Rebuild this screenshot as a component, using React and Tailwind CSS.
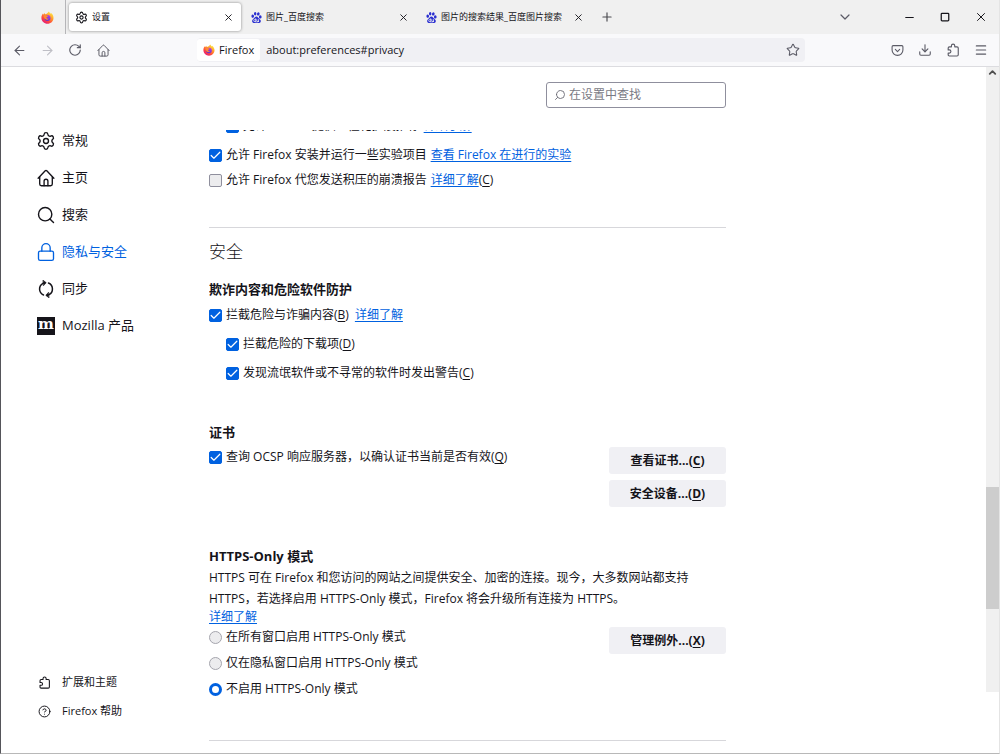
import React from 'react';
import {
  ArrowLeft,
  ArrowRight,
  Check,
  ChevronDown,
  ChevronUp,
  CircleHelp,
  Download,
  Lock,
  Menu,
  Minus,
  Plus,
  Pocket,
  RotateCw,
  Search,
  Settings,
  Square,
  Star,
  X,
} from 'lucide-react';
import { SiBaidu } from 'react-icons/si';

const FirefoxLogo = ({ className }) => (
  <svg viewBox="0 0 24 24" className={className} aria-hidden="true">
    <defs>
      <linearGradient id="fx-flame" x1="0.85" y1="0.05" x2="0.2" y2="0.95">
        <stop offset="0" stopColor="#fff04a" />
        <stop offset="0.35" stopColor="#ffa42e" />
        <stop offset="0.7" stopColor="#ff4a3d" />
        <stop offset="1" stopColor="#e3187c" />
      </linearGradient>
      <linearGradient id="fx-globe" x1="0.7" y1="0" x2="0.3" y2="1">
        <stop offset="0" stopColor="#b03df0" />
        <stop offset="1" stopColor="#5a35c8" />
      </linearGradient>
    </defs>
    <path
      fill="url(#fx-flame)"
      d="M14.500.8c1.300 1.500 1.700 2.700 3.400 4.200.5-.2.300-1 .2-1.600 2.900 2 5 5.200 5 9.300C23.100 18.800 18 23.400 12 23.400S.8 18.700.8 12.700c0-3.200 1-6 2.700-8 .1.900.3 1.500.7 2 .5-1.300 1.400-2.500 2.500-3.200 0 1 .3 1.900.8 2.500 2.700-.6 4.800-2.200 7-5.200z"
    />
    <circle cx="12" cy="13" r="5.600" fill="url(#fx-globe)" />
    <path
      fill="#ff8a30"
      d="M4.800 8.200c2-1.500 4.300-1.300 6 .2 1.300.2 2.500.3 2.500 1-.2 1.400-2.600 1.300-3.200 2.700.2 1.800 2 2.600 4.600 1.600-1.200 2.200-4 3-6.200 1.700C5.900 14 4.600 11.200 4.800 8.200z"
    />
  </svg>
);

const HomeIcon = ({ className }) => (
  <svg viewBox="0 0 16 16" fill="none" stroke="currentColor" strokeWidth="1.200" strokeLinecap="round" strokeLinejoin="round" className={className} aria-hidden="true">
    <path d="M1 8.200 7.300 1.600a1 1 0 0 1 1.400 0L15 8.200" />
    <path d="M2.400 7v6.400c0 .9.600 1.500 1.500 1.500h8.200c.9 0 1.500-.6 1.500-1.500V7" />
    <path d="M6.300 14.800v-4a1.700 1.700 0 0 1 3.400 0v4" />
  </svg>
);

const PuzzleIcon = ({ className }) => (
  <svg viewBox="0 0 16 16" fill="none" stroke="currentColor" strokeWidth="1.300" strokeLinejoin="round" className={className} aria-hidden="true">
    <path d="M2.500 5.800c0-.9.500-1.400 1.400-1.400h2.300V3.200a1.900 1.900 0 0 1 3.800 0v1.200h2.600c.9 0 1.400.5 1.400 1.400v7.700c0 .9-.5 1.400-1.400 1.400H3.900c-.9 0-1.400-.5-1.400-1.400v-2h1.300a1.800 1.800 0 0 0 0-3.600H2.500z" />
  </svg>
);

const SyncIcon = ({ className }) => (
  <svg viewBox="0 0 18 18" fill="none" stroke="currentColor" strokeWidth="1.500" strokeLinecap="round" className={className} aria-hidden="true">
    <path d="M6.500 15A6.500 6.500 0 0 1 6 3.300l1.800-.7" />
    <path d="M11.500 3a6.500 6.500 0 0 1 .5 11.700l-1.800.7" />
    <path d="M6.200.3 9.200 2.700 6.600 5.600zM11.800 17.700l-3-2.400 2.600-2.900z" fill="currentColor" strokeWidth="0.600" />
  </svg>
);

const MozillaIcon = () => (
  <span className="flex size-[18px] items-center justify-center bg-[#15141a] pb-[3px] font-['DejaVu_Serif',serif] text-[15px] leading-[15px] font-bold text-white" aria-hidden="true">
    m
  </span>
);

const tabs = [
  { title: '设置', icon: <Settings className="size-[13px]" strokeWidth={2} />, active: true },
  { title: '图片_百度搜索', icon: <SiBaidu className="size-[11px] text-[#2a2fd0]" /> },
  { title: '图片的搜索结果_百度图片搜索', icon: <SiBaidu className="size-[11px] text-[#2a2fd0]" /> },
];

const categories = [
  { name: '常规', icon: <Settings className="size-5" strokeWidth={1.6} /> },
  { name: '主页', icon: <HomeIcon className="size-[18px]" /> },
  { name: '搜索', icon: <Search className="size-5" strokeWidth={1.7} /> },
  { name: '隐私与安全', icon: <Lock className="size-5" strokeWidth={1.6} />, current: true },
  { name: '同步', icon: <SyncIcon className="size-[18px]" /> },
  { name: 'Mozilla 产品', icon: <MozillaIcon /> },
];

const iconButton = 'flex h-7 w-7 items-center justify-center';

const TabStrip = () => (
  <div className="flex h-[34px] items-center bg-[#f0f0f0]">
    <button type="button" aria-label="Firefox" className="flex h-full w-[65px] items-center justify-end border-r border-[#b5b5b8] pr-[11px]">
      <FirefoxLogo className="size-[13px]" />
    </button>
    <div className="ml-[3px] flex gap-[3px]">
      {tabs.map((tab) => (
        <div
          key={tab.title}
          className={
            tab.active
              ? 'flex h-7 w-[172px] items-center rounded-[3px] bg-white pr-[7px] pl-[6px] shadow-[0_0_3px_rgba(0,0,0,0.45)]'
              : 'flex h-7 w-[172px] items-center pr-[7px] pl-[7px]'
          }
        >
          {tab.icon}
          <span className="ml-1 flex-1 truncate text-[9px]">{tab.title}</span>
          <button type="button" aria-label="关闭标签页" className="flex size-3 items-center justify-center">
            <X className="size-[11px]" strokeWidth={2} />
          </button>
        </div>
      ))}
    </div>
    <button type="button" aria-label="新建标签页" className="ml-[2px] flex size-7 items-center justify-center text-[#4a4a50]">
      <Plus className="size-[14px]" strokeWidth={2} />
    </button>
    <div className="ml-auto flex items-center">
      <button type="button" aria-label="列出所有标签页" className="mr-8 flex h-7 w-7 items-center justify-center text-[#5b5b66]">
        <ChevronDown className="size-4" strokeWidth={1.8} />
      </button>
      <button type="button" aria-label="最小化" className="flex h-7 w-9 items-center justify-center">
        <Minus className="size-[13px]" strokeWidth={2} />
      </button>
      <button type="button" aria-label="最大化" className="flex h-7 w-9 items-center justify-center">
        <Square className="size-[10px]" strokeWidth={3} />
      </button>
      <button type="button" aria-label="关闭" className="flex h-7 w-9 items-center justify-center">
        <X className="size-[14px]" strokeWidth={1.7} />
      </button>
    </div>
  </div>
);

const Toolbar = () => (
  <div className="flex h-[33px] items-center border-b border-[#dcdce0] bg-[#f9f9fb] px-1 text-[#5b5b66]">
    <button type="button" aria-label="后退" className={iconButton}><ArrowLeft className="size-[15px]" strokeWidth={1.7} /></button>
    <button type="button" aria-label="前进" disabled className={`${iconButton} text-[#bfbfc6]`}><ArrowRight className="size-[15px]" strokeWidth={1.7} /></button>
    <button type="button" aria-label="刷新" className={iconButton}><RotateCw className="size-[14px]" strokeWidth={2} /></button>
    <button type="button" aria-label="主页" className={iconButton}><HomeIcon className="size-[13px]" /></button>
    <div className="mr-[78px] ml-20 flex h-6 flex-1 items-center rounded bg-[#f0f0f4] text-[#15141a]">
      <button type="button" className="flex h-[22px] items-center gap-1 rounded-[3px] bg-white px-[6px] text-[11px]">
        <FirefoxLogo className="size-3" />
        Firefox
      </button>
      <input
        type="text"
        aria-label="地址栏"
        defaultValue="about:preferences#privacy"
        className="min-w-0 flex-1 bg-transparent pl-[6px] text-[11px] outline-none"
      />
      <button type="button" aria-label="加入书签" className="flex size-6 items-center justify-center text-[#5b5b66]">
        <Star className="size-[14px]" strokeWidth={1.8} />
      </button>
    </div>
    <button type="button" aria-label="Pocket" className={iconButton}><Pocket className="size-[13px]" strokeWidth={2} /></button>
    <button type="button" aria-label="下载" className={iconButton}><Download className="size-[14px]" strokeWidth={1.9} /></button>
    <button type="button" aria-label="扩展" className={iconButton}><PuzzleIcon className="size-[14px]" /></button>
    <button type="button" aria-label="菜单" className={iconButton}><Menu className="size-[14px]" strokeWidth={1.9} /></button>
  </div>
);

const Sidebar = () => (
  <nav className="flex w-52 shrink-0 flex-col pt-[55px] pb-[27px] pl-9">
    <ul>
      {categories.map((item) => (
        <li key={item.name}>
          <a
            href="#"
            className={
              item.current
                ? 'flex h-[37px] items-center text-[13px] text-[#0061e0]'
                : 'flex h-[37px] items-center text-[13px] text-[#15141a]'
            }
          >
            <span className="mr-[7px] flex w-[18px] justify-center [&>svg]:shrink-0">{item.icon}</span>
            {item.name}
          </a>
        </li>
      ))}
    </ul>
    <ul className="mt-auto text-[11px]">
      <li>
        <a href="#" className="flex h-[29px] items-center">
          <span className="mr-[10px] flex w-[15px] justify-center"><PuzzleIcon className="size-[13px]" /></span>
          扩展和主题
        </a>
      </li>
      <li>
        <a href="#" className="flex h-[29px] items-center">
          <span className="mr-[10px] flex w-[15px] justify-center"><CircleHelp className="size-[13px]" strokeWidth={1.8} /></span>
          Firefox 帮助
        </a>
      </li>
    </ul>
  </nav>
);

const Key = ({ children }) => (
  <>(<u className="underline-offset-2">{children}</u>)</>
);

const TextLink = ({ children }) => (
  <a href="#" className="text-[#0061e0] underline underline-offset-2">{children}</a>
);

const CheckRow = ({ id, checked, label, children, className = '' }) => (
  <div className={`flex h-5 items-center ${className}`}>
    <span className="relative size-[13px]">
      <input
        id={id}
        type="checkbox"
        defaultChecked={checked}
        className="peer block size-[13px] appearance-none rounded-[2px] border border-[#8f8f9d] bg-[#ececee] checked:border-[#0061e0] checked:bg-[#0061e0]"
      />
      <Check className="pointer-events-none absolute inset-0 hidden size-[13px] text-white peer-checked:block" strokeWidth={2.2} />
    </span>
    <label htmlFor={id} className="ml-1">{label}</label>
    {children}
  </div>
);

const RadioRow = ({ id, checked, label }) => (
  <div className="flex h-5 items-center">
    <input
      id={id}
      type="radio"
      name="https-only"
      defaultChecked={checked}
      className="size-[13px] appearance-none rounded-full border border-[#a5a5ad] bg-[#ececee] checked:border-[3px] checked:border-[#0061e0] checked:bg-white"
    />
    <label htmlFor={id} className="ml-1">{label}</label>
  </div>
);

const ActionButton = ({ label, accessKey }) => (
  <button type="button" className="h-[27px] w-[117px] rounded-[3px] bg-[#f0f0f4] text-xs font-bold">
    {label}...<Key>{accessKey}</Key>
  </button>
);

const Preferences = () => (
  <main className="flex min-w-0 flex-1 flex-col pt-[15px]">
    <div className="flex max-w-[517px] justify-end">
      <label className="flex h-[26px] w-[180px] items-center rounded-[3px] border border-[#8f8f9d] bg-white px-[7px]">
        <Search className="size-3 -scale-x-100 text-[#6b6b75]" strokeWidth={1.8} />
        <input type="search" aria-label="在设置中查找" placeholder="在设置中查找" className="ml-[3px] min-w-0 flex-1 text-xs outline-none placeholder:text-[#7a7a84]" />
      </label>
    </div>

    {/* Scrolled pane, its first row is partly out of view */}
    <div className="mt-[22px] min-h-0 flex-1 overflow-hidden">
      <div className="-mt-[14px] max-w-[517px] text-xs">
        <CheckRow id="recommend" checked label="允许 Firefox 提供个性化扩展推荐" className="pl-[17px]">
          <span className="ml-1"><TextLink>详细了解</TextLink></span>
        </CheckRow>
        <CheckRow id="studies" checked label="允许 Firefox 安装并运行一些实验项目" className="mt-[9px]">
          <span className="ml-1"><TextLink>查看 Firefox 在进行的实验</TextLink></span>
        </CheckRow>
        <CheckRow id="crash" label="允许 Firefox 代您发送积压的崩溃报告" className="mt-[5px]">
          <span className="ml-1"><TextLink>详细了解</TextLink><Key>C</Key></span>
        </CheckRow>

        <hr className="mt-[37px] border-[#d7d7db]" />
        <h1 className="mt-3 text-[17px] leading-6 font-light">安全</h1>

        {/* Deceptive content */}
        <h2 className="mt-[15px] text-[13px] leading-5 font-bold">欺诈内容和危险软件防护</h2>
        <CheckRow id="block" checked label={<>拦截危险与诈骗内容<Key>B</Key></>} className="mt-[6px]">
          <span className="ml-[6px]"><TextLink>详细了解</TextLink></span>
        </CheckRow>
        <CheckRow id="downloads" checked label={<>拦截危险的下载项<Key>D</Key></>} className="mt-[9px] pl-[17px]" />
        <CheckRow id="uncommon" checked label={<>发现流氓软件或不寻常的软件时发出警告<Key>C</Key></>} className="mt-[9px] pl-[17px]" />

        {/* Certificates */}
        <h2 className="mt-[39px] text-[13px] leading-5 font-bold">证书</h2>
        <div className="mt-[5px] flex justify-between">
          <CheckRow id="ocsp" checked label={<>查询 OCSP 响应服务器，以确认证书当前是否有效<Key>Q</Key></>} />
          <div className="flex flex-col gap-[6px]">
            <ActionButton label="查看证书" accessKey="C" />
            <ActionButton label="安全设备" accessKey="D" />
          </div>
        </div>

        {/* HTTPS-Only */}
        <h2 className="mt-[39px] text-[13px] leading-5 font-bold">HTTPS-Only 模式</h2>
        <p className="mt-px pr-7 leading-[21px]">
          HTTPS 可在 Firefox 和您访问的网站之间提供安全、加密的连接。现今，大多数网站都支持 HTTPS，若选择启用 HTTPS-Only 模式，Firefox 将会升级所有连接为 HTTPS。
        </p>
        <div className="leading-4"><TextLink>详细了解</TextLink></div>
        <div className="mt-[2px] flex justify-between">
          <div className="flex flex-col gap-[6px]">
            <RadioRow id="https-all" label="在所有窗口启用 HTTPS-Only 模式" />
            <RadioRow id="https-private" label="仅在隐私窗口启用 HTTPS-Only 模式" />
            <RadioRow id="https-off" checked label="不启用 HTTPS-Only 模式" />
          </div>
          <ActionButton label="管理例外" accessKey="X" />
        </div>
        <hr className="mt-[41px] border-[#d7d7db]" />
      </div>
    </div>
  </main>
);

const Scrollbar = () => (
  <div className="mb-[61px] flex w-[13px] shrink-0 flex-col bg-[#f0f0f0]" aria-hidden="true">
    <ChevronUp className="mx-auto size-[11px] text-[#505050]" strokeWidth={4} />
    <div className="flex-[409]" />
    <div className="flex-[122] bg-[#cdcdcd]" />
    <div className="flex-[83]" />
  </div>
);

const App = () => {
  return (
    <div
      lang="zh-CN"
      className="flex h-screen flex-col overflow-hidden border-r border-b border-l border-r-[#e4e4e4] border-b-[#b8b8b8] border-l-[#55555a] bg-white font-['Open_Sans','Noto_Sans_CJK_SC',sans-serif] text-[#15141a]"
    >
      <TabStrip />
      <Toolbar />
      <div className="flex min-h-0 flex-1">
        <Sidebar />
        <Preferences />
        <Scrollbar />
      </div>
    </div>
  );
};

export default App;
